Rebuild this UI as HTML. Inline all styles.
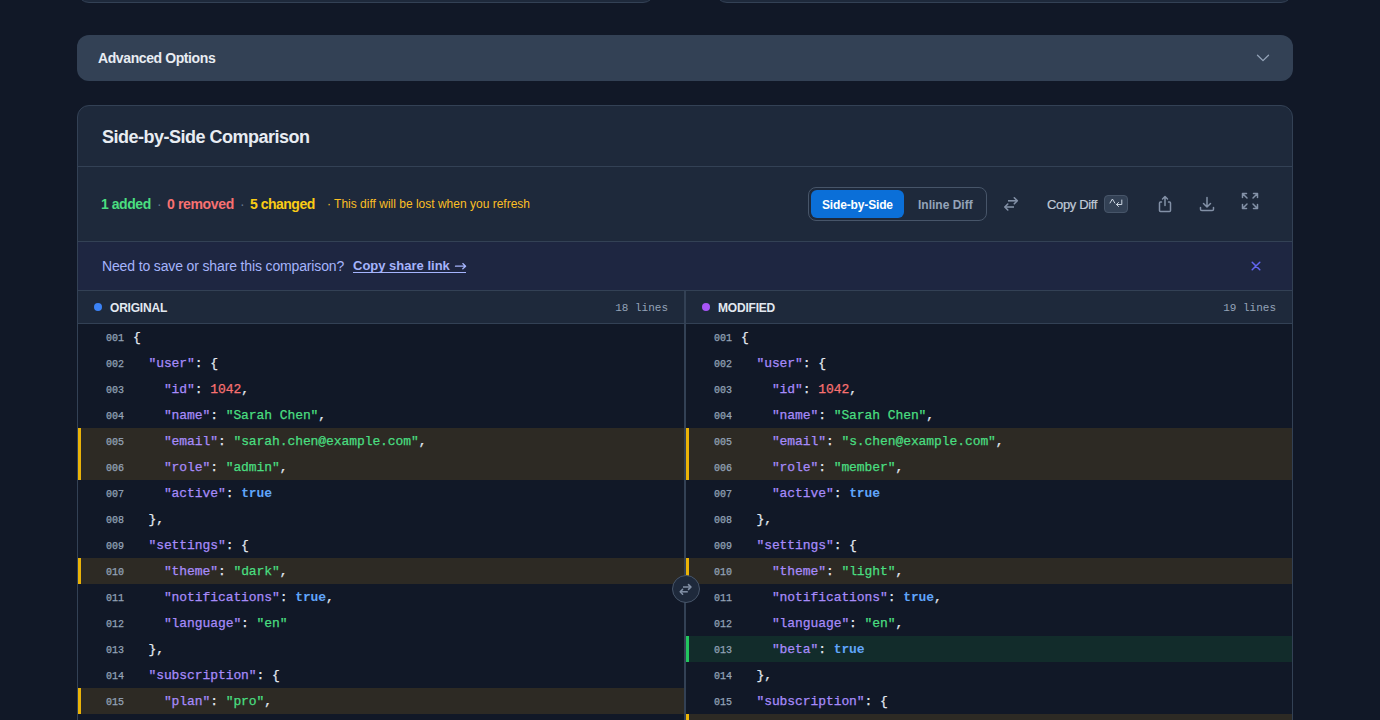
<!DOCTYPE html>
<html><head><meta charset="utf-8">
<style>
*{box-sizing:border-box;margin:0;padding:0}
html,body{width:1380px;height:720px;overflow:hidden;background:#111827;font-family:"Liberation Sans",sans-serif;color:#e2e8f0}
.abs{position:absolute}
.st{top:196px;line-height:16px;white-space:pre;font-size:14px;font-weight:700}
.topcard{position:absolute;top:-40px;height:43px;background:#1e293b;border:1px solid #334155;border-radius:12px}
#adv{position:absolute;left:77px;top:35px;width:1216px;height:46px;background:#334155;border-radius:12px}
#adv .t{position:absolute;left:21px;top:15px;font-size:14px;font-weight:700;letter-spacing:-0.4px;color:#e8ecf2;line-height:16px}
#card{position:absolute;left:77px;top:105px;width:1216px;height:700px;background:#1e293b;border:1px solid #334155;border-radius:12px;overflow:hidden}
#hdr{position:absolute;left:0;top:0;width:1214px;height:61px;border-bottom:1px solid #334155}
#hdr .t{position:absolute;left:24px;top:20px;font-size:18px;font-weight:700;letter-spacing:-0.5px;color:#e8ecf2;line-height:22px}
#stats{position:absolute;left:0;top:61px;width:1214px;height:75px;border-bottom:1px solid #334155}
#banner{position:absolute;left:0;top:136px;width:1214px;height:49px;background:#1e2641;border-bottom:1px solid #334155}
.panel{position:absolute;top:185px;width:606px;height:520px;background:#111827}
.phdr{position:absolute;left:0;top:0;width:606px;height:33px;background:#1e293b;border-bottom:1px solid #334155}
.dot{position:absolute;top:12px;width:8px;height:8px;border-radius:50%}
.pt{position:absolute;top:10px;font-size:12px;font-weight:700;color:#e2e8f0;line-height:14px;letter-spacing:-0.2px}
.lc{position:absolute;top:10px;right:16px;font-family:"Liberation Mono",monospace;font-size:11px;color:#94a3b8;line-height:14px}
.rows{position:absolute;left:0;top:33px;width:606px}
.r{position:relative;height:26px;white-space:pre;font-family:"Liberation Mono",monospace;font-size:13px;line-height:26px;color:#e2e8f0;-webkit-text-stroke:0.25px currentColor}
.r .n{position:absolute;left:28px;top:2px;font-size:10px;color:#94a3b8;line-height:26px}
.r .c{position:absolute;left:55px;top:1px;letter-spacing:-0.08px}
.r.chg{background:#2d2a24}
.r.chg::before{content:"";position:absolute;left:0;top:0;width:3px;height:26px;background:#eab308}
.r.add{background:#122c2b}
.r.add::before{content:"";position:absolute;left:0;top:0;width:3px;height:26px;background:#22c55e}
.k{color:#a78bfa}.s{color:#4ade80}.num{color:#f87171}.b{color:#60a5fa;font-weight:700;-webkit-text-stroke:0}
</style></head><body>
<div class="topcard" style="left:77px;width:578px"></div>
<div class="topcard" style="left:715px;width:578px"></div>
<div id="adv"><div class="t">Advanced Options</div>
<svg class="abs" style="left:1179px;top:19px" width="14" height="8" viewBox="0 0 14 8"><path d="M1.5 1.2 L7 6.6 L12.5 1.2" fill="none" stroke="#94a3b8" stroke-width="1.3" stroke-linecap="round" stroke-linejoin="round"/></svg>
</div>
<div id="card">
 <div id="hdr"><div class="t">Side-by-Side Comparison</div></div>
 <div id="stats"></div>
 <div id="banner"></div>
 <div class="panel" style="left:0">
  <div class="phdr"><div class="dot" style="left:16px;background:#3b82f6"></div><div class="pt" style="left:32px">ORIGINAL</div><div class="lc">18 lines</div></div>
  <div class="rows" id="L">
<div class="r"><span class="n">001</span><span class="c">{</span></div>
<div class="r"><span class="n">002</span><span class="c">  <span class="k">"user"</span>: {</span></div>
<div class="r"><span class="n">003</span><span class="c">    <span class="k">"id"</span>: <span class="num">1042</span>,</span></div>
<div class="r"><span class="n">004</span><span class="c">    <span class="k">"name"</span>: <span class="s">"Sarah Chen"</span>,</span></div>
<div class="r chg"><span class="n">005</span><span class="c">    <span class="k">"email"</span>: <span class="s">"sarah.chen@example.com"</span>,</span></div>
<div class="r chg"><span class="n">006</span><span class="c">    <span class="k">"role"</span>: <span class="s">"admin"</span>,</span></div>
<div class="r"><span class="n">007</span><span class="c">    <span class="k">"active"</span>: <span class="b">true</span></span></div>
<div class="r"><span class="n">008</span><span class="c">  },</span></div>
<div class="r"><span class="n">009</span><span class="c">  <span class="k">"settings"</span>: {</span></div>
<div class="r chg"><span class="n">010</span><span class="c">    <span class="k">"theme"</span>: <span class="s">"dark"</span>,</span></div>
<div class="r"><span class="n">011</span><span class="c">    <span class="k">"notifications"</span>: <span class="b">true</span>,</span></div>
<div class="r"><span class="n">012</span><span class="c">    <span class="k">"language"</span>: <span class="s">"en"</span></span></div>
<div class="r"><span class="n">013</span><span class="c">  },</span></div>
<div class="r"><span class="n">014</span><span class="c">  <span class="k">"subscription"</span>: {</span></div>
<div class="r chg"><span class="n">015</span><span class="c">    <span class="k">"plan"</span>: <span class="s">"pro"</span>,</span></div>
<div class="r"><span class="n">016</span><span class="c">    <span class="k">"seats"</span>: <span class="num">5</span></span></div>
</div>
 </div>
 <div class="panel" style="left:608px">
  <div class="phdr"><div class="dot" style="left:16px;background:#a855f7"></div><div class="pt" style="left:32px">MODIFIED</div><div class="lc">19 lines</div></div>
  <div class="rows" id="R">
<div class="r"><span class="n">001</span><span class="c">{</span></div>
<div class="r"><span class="n">002</span><span class="c">  <span class="k">"user"</span>: {</span></div>
<div class="r"><span class="n">003</span><span class="c">    <span class="k">"id"</span>: <span class="num">1042</span>,</span></div>
<div class="r"><span class="n">004</span><span class="c">    <span class="k">"name"</span>: <span class="s">"Sarah Chen"</span>,</span></div>
<div class="r chg"><span class="n">005</span><span class="c">    <span class="k">"email"</span>: <span class="s">"s.chen@example.com"</span>,</span></div>
<div class="r chg"><span class="n">006</span><span class="c">    <span class="k">"role"</span>: <span class="s">"member"</span>,</span></div>
<div class="r"><span class="n">007</span><span class="c">    <span class="k">"active"</span>: <span class="b">true</span></span></div>
<div class="r"><span class="n">008</span><span class="c">  },</span></div>
<div class="r"><span class="n">009</span><span class="c">  <span class="k">"settings"</span>: {</span></div>
<div class="r chg"><span class="n">010</span><span class="c">    <span class="k">"theme"</span>: <span class="s">"light"</span>,</span></div>
<div class="r"><span class="n">011</span><span class="c">    <span class="k">"notifications"</span>: <span class="b">true</span>,</span></div>
<div class="r"><span class="n">012</span><span class="c">    <span class="k">"language"</span>: <span class="s">"en"</span>,</span></div>
<div class="r add"><span class="n">013</span><span class="c">    <span class="k">"beta"</span>: <span class="b">true</span></span></div>
<div class="r"><span class="n">014</span><span class="c">  },</span></div>
<div class="r"><span class="n">015</span><span class="c">  <span class="k">"subscription"</span>: {</span></div>
<div class="r chg"><span class="n">016</span><span class="c">    <span class="k">"plan"</span>: <span class="s">"team"</span>,</span></div>
</div>
 </div>
</div>

<div class="abs" style="left:684px;top:291px;width:2px;height:429px;background:#334155"></div>
<!-- stats -->
<div class="abs st" style="left:101px;color:#4ade80;letter-spacing:-0.45px">1 added</div>
<div class="abs st" style="left:157px;color:#64748b;font-weight:400">·</div>
<div class="abs st" style="left:167px;color:#f87171;letter-spacing:-0.35px">0 removed</div>
<div class="abs st" style="left:240px;color:#64748b;font-weight:400">·</div>
<div class="abs st" style="left:250px;color:#facc15;letter-spacing:-0.5px">5 changed</div>
<div class="abs" style="left:327px;top:197px;line-height:14px;white-space:pre;font-size:12px;color:#fbbf24">· This diff will be lost when you refresh</div>
<!-- toggle -->
<div class="abs" style="left:808px;top:187px;width:179px;height:34px;border:1px solid #475569;border-radius:8px"></div>
<div class="abs" style="left:811px;top:190px;width:93px;height:28px;background:#0b6fd8;border-radius:6px"></div>
<div class="abs" style="left:822px;top:198px;line-height:14px;font-size:12px;font-weight:700;color:#fff;letter-spacing:-0.15px">Side-by-Side</div>
<div class="abs" style="left:918px;top:198px;line-height:14px;font-size:12px;font-weight:700;color:#94a3b8">Inline Diff</div>
<!-- swap icon -->
<svg class="abs" style="left:1000px;top:194px" width="20" height="20" viewBox="0 0 20 20" fill="none" stroke="#8391a7" stroke-width="1.6" stroke-linejoin="round"><path d="M8 6.8 H16.8"/><path d="M14.3 3.8 L17.3 6.8 L14.3 9.8" stroke-linecap="round"/><path d="M14 13 H5.3"/><path d="M7.8 10 L4.8 13 L7.8 16" stroke-linecap="round"/></svg>
<div class="abs" style="left:1047px;top:197px;line-height:15px;font-size:13px;letter-spacing:-0.35px;color:#c0cad8;-webkit-text-stroke:0.2px currentColor">Copy Diff</div>
<div class="abs" style="left:1104px;top:195px;width:24px;height:18px;background:#334155;border:1px solid #475569;border-radius:4px"></div>
<svg class="abs" style="left:1104px;top:195px" width="24" height="18" viewBox="0 0 24 18" fill="none" stroke="#cbd5e1" stroke-width="1" stroke-linecap="round" stroke-linejoin="round"><path d="M6 8 L8.4 4 L10.8 8"/><path d="M17.8 5 V9.5 H12.5 M14.5 7.5 L12.5 9.5 L14.5 11.5"/></svg>
<!-- share -->
<svg class="abs" style="left:1157px;top:194px" width="16" height="20" viewBox="0 0 16 20" fill="none" stroke="#8391a7" stroke-width="1.5" stroke-linecap="round" stroke-linejoin="round"><path d="M4.5 8 H3.5 Q2.5 8 2.5 9 V16.5 Q2.5 17.5 3.5 17.5 H12.5 Q13.5 17.5 13.5 16.5 V9 Q13.5 8 12.5 8 H11.5"/><path d="M8 11.5 V2.5 M5.5 5 L8 2.5 L10.5 5"/></svg>
<!-- download -->
<svg class="abs" style="left:1198px;top:195px" width="18" height="18" viewBox="0 0 18 18" fill="none" stroke="#8391a7" stroke-width="1.5" stroke-linecap="round" stroke-linejoin="round"><path d="M9 2.5 V12 M5.5 8.5 L9 12 L12.5 8.5"/><path d="M2.5 12.5 V14.2 Q2.5 15.5 3.8 15.5 H14.2 Q15.5 15.5 15.5 14.2 V12.5"/></svg>
<!-- expand -->
<svg class="abs" style="left:1241px;top:192px" width="18" height="18" viewBox="0 0 18 18" fill="none" stroke="#8391a7" stroke-width="1.5" stroke-linecap="round" stroke-linejoin="round"><path d="M1.5 5.5 V1.5 H5.5 M1.5 1.5 L6 6"/><path d="M16.5 5.5 V1.5 H12.5 M16.5 1.5 L12 6"/><path d="M1.5 12.5 V16.5 H5.5 M1.5 16.5 L6 12"/><path d="M16.5 12.5 V16.5 H12.5 M16.5 16.5 L12 12"/></svg>
<!-- banner -->
<div class="abs" style="left:102px;top:258px;line-height:16px;font-size:14px;color:#a5b4fc;white-space:pre;letter-spacing:-0.14px">Need to save or share this comparison?</div>
<div class="abs" style="left:353px;top:258px;line-height:16px;font-size:13px;font-weight:700;color:#a5b4fc;white-space:pre">Copy share link</div>
<svg class="abs" style="left:453px;top:261px" width="14" height="10" viewBox="0 0 14 10" fill="none" stroke="#a5b4fc" stroke-width="1.3" stroke-linecap="round" stroke-linejoin="round"><path d="M2.5 5.2 H12.5 M9.8 2.6 L12.6 5.2 L9.8 7.8"/></svg>
<div class="abs" style="left:353px;top:272px;width:113px;height:1.2px;background:#a5b4fc"></div>
<svg class="abs" style="left:1250px;top:260px" width="12" height="12" viewBox="0 0 12 12" fill="none" stroke="#6366f1" stroke-width="1.5" stroke-linecap="round"><path d="M2.2 2.2 L9.8 9.8 M9.8 2.2 L2.2 9.8"/></svg>
<!-- center swap button -->
<div class="abs" style="left:672px;top:575px;width:28px;height:28px;border-radius:50%;background:#1e293b;border:1px solid #475569"></div>
<svg class="abs" style="left:676px;top:580px" width="20" height="20" viewBox="0 0 20 20" fill="none" stroke="#8391a7" stroke-width="1.5" stroke-linejoin="round"><path d="M7 7 H14.5"/><path d="M12.5 4.6 L15 7 L12.5 9.4" stroke-linecap="round"/><path d="M11.8 11.8 H4.7"/><path d="M6.6 9.4 L4.2 11.8 L6.6 14.2" stroke-linecap="round"/></svg>
</body></html>
